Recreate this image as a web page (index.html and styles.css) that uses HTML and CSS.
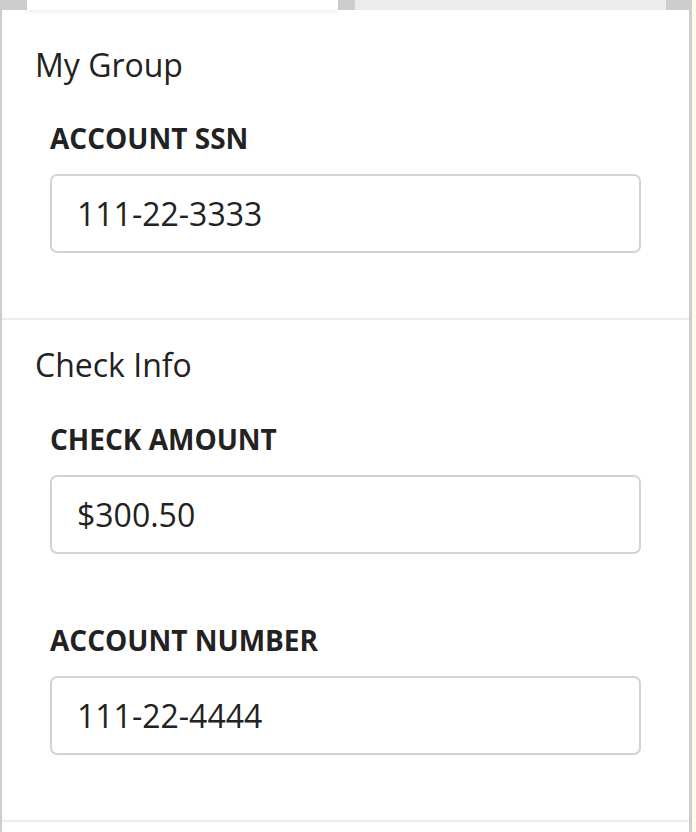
FILE: index.html
```html
<!DOCTYPE html>
<html>
<head>
<meta charset="utf-8">
<link rel="stylesheet" href="styles.css">
</head>
<body>
<div class="frame">
  <div class="tabs">
    <div class="tab active"></div>
    <div class="tab"></div>
  </div>
  <div class="panel">
    <section class="group first">
      <h2 class="group-title">My Group</h2>
      <div class="field">
        <label class="field-label">ACCOUNT SSN</label>
        <div class="field-input">111-22-3333</div>
      </div>
    </section>
    <section class="group second">
      <h2 class="group-title">Check Info</h2>
      <div class="field">
        <label class="field-label">CHECK AMOUNT</label>
        <div class="field-input">$300.50</div>
      </div>
      <div class="field">
        <label class="field-label">ACCOUNT NUMBER</label>
        <div class="field-input">111-22-4444</div>
      </div>
    </section>
  </div>
</div>
</body>
</html>
```

FILE: styles.css
```css
html, body {
  margin: 0;
  padding: 0;
  background: #fffbe8;
  height: 100%;
  overflow: hidden;
}
body {
  font-family: "Open Sans", "Noto Sans", sans-serif;
  color: #222;
}
.frame {
  width: 692px;
  height: 832px;
  display: flex;
  flex-direction: column;
  overflow: hidden;
}
.tabs {
  height: 10px;
  background: #cdcdcd;
  display: flex;
  gap: 17px;
  padding-left: 27px;
  flex-shrink: 0;
  position: relative;
  z-index: 1;
}
.tab {
  width: 311px;
  background: #ececec;
}
.tab.active {
  background: #fff;
  box-shadow: 0 3px 4px rgba(0, 0, 0, 0.06);
}
.panel {
  flex: 1;
  min-height: 0;
  overflow: hidden;
  background: #fff;
  border-left: 2px solid #cdcdcd;
  border-right: 3px solid #cdcdcd;
}
.group {
  padding: 23px 0 65px 33px;
  border-bottom: 2px solid #ececec;
}
.group.first {
  padding-top: 33px;
  padding-bottom: 65px;
}
.group.first .field {
  margin-top: 32px;
}
.group-title {
  margin: 0;
  font-size: 32px;
  font-weight: 400;
  line-height: 44px;
  color: #222;
}
.field {
  margin: 33px 0 0 15px;
  width: 591px;
}
.group .field + .field {
  margin-top: 67px;
}
.field-label {
  display: block;
  font-size: 28px;
  font-weight: 700;
  line-height: 38px;
  color: #222;
  margin-bottom: 17px;
}
.field-input {
  box-sizing: border-box;
  height: 79px;
  border: 2px solid #d3d3d3;
  border-radius: 7px;
  padding: 0 25px;
  font-size: 32px;
  line-height: 75px;
  color: #222;
}
```
